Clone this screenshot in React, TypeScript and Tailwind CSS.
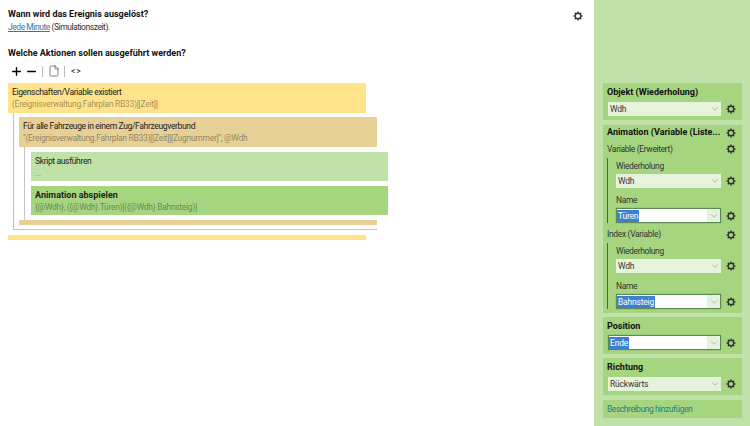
import React from 'react';
import { ChevronDown, Plus, Minus, File } from 'lucide-react';

// chunky little cog like the one in the reference, lucide's has too many curves
function Gear({ className = '' }: { className?: string }) {
  return (
    <svg viewBox="-1 -1 14 14" className={`w-3 h-3 shrink-0 ${className}`} fill="none" stroke="#333">
      <circle cx="6" cy="6" r="3.2" strokeWidth="1.5" />
      <path
        d="M6 .8V2.6M6 9.4V11.2M.8 6H2.6M9.4 6H11.2M2.3 2.3L3.6 3.6M8.4 8.4L9.7 9.7M9.7 2.3L8.4 3.6M3.6 8.4L2.3 9.7"
        strokeWidth="1.6"
      />
    </svg>
  );
}

function Select({ value, active = false }: { value: string; active?: boolean }) {
  return (
    <div
      className={`flex-1 flex items-center justify-between ${
        active ? 'h-[15px] bg-white border border-[#5f8a56] shadow-[0_0_1px_#5f8a56]' : 'h-[14px] pl-[1px] bg-[#e6f3dc]'
      }`}
    >
      <span className={`text-[8.5px] tracking-[-0.2px] leading-[12px] px-[1px] ${active ? 'bg-[#3a7fd0] text-white' : 'text-[#333]'}`}>
        {value}
      </span>
      <span className={`h-full w-[13px] flex items-center justify-center ${active ? 'bg-[#e6f3dc]' : ''}`}>
        <ChevronDown className="w-2.5 h-2.5 text-[#8a9a80]" strokeWidth={1.5} />
      </span>
    </div>
  );
}

function SelectRow({ value, active }: { value: string; active?: boolean }) {
  return (
    <div className="flex items-center gap-[4px]">
      <Select value={value} active={active} />
      <Gear />
    </div>
  );
}

function Panel({ title, children }: { title: string; children: React.ReactNode }) {
  return (
    <div className="bg-[#a5d67f] h-[37px] px-[5px] pt-[2px]">
      <div className="text-[9px] leading-[14px] h-[14px] font-bold text-[#111] -ml-[1px] mb-[3px]">{title}</div>
      {children}
    </div>
  );
}

function NestedField({ label, value, active }: { label: string; value: string; active?: boolean }) {
  return (
    <div>
      <div className="text-[8.5px] tracking-[-0.35px] leading-[12px] text-[#333] h-[16px] flex items-center">{label}</div>
      <SelectRow value={value} active={active} />
    </div>
  );
}

function ActionBlock({
  title,
  sub,
  className,
  bold,
}: {
  title: string;
  sub: string;
  className: string;
  bold?: boolean;
}) {
  return (
    <div className={`px-[4px] pt-[3px] ${className}`}>
      <div className={`leading-[12px] text-[#222] ${bold ? 'font-bold text-[9px]' : 'text-[8.5px] tracking-[-0.35px]'}`}>{title}</div>
      <div className="text-[8.5px] tracking-[-0.3px] leading-[12px] text-black/40">{sub}</div>
    </div>
  );
}

export default function App() {
  return (
    <div className="w-[750px] h-[426px] flex bg-white overflow-hidden font-['Roboto',sans-serif]">
      <div className="flex-1 pl-[8px] pr-[10px] pt-[8px]">
        <div className="flex justify-between">
          <div>
            <div className="text-[9px] leading-[13px] font-bold text-[#111]">Wann wird das Ereignis ausgelöst?</div>
            <div className="text-[8.5px] tracking-[-0.45px] leading-[13px] text-[#333]">
              <span className="text-[#2a7aa8] underline">Jede Minute</span> (Simulationszeit).
            </div>
          </div>
          <Gear className="mt-[2px]" />
        </div>

        <div className="text-[9px] leading-[13px] font-bold text-[#111] mt-[13px]">Welche Aktionen sollen ausgeführt werden?</div>
        <div className="flex items-center h-[14px] mt-[4px] pl-[2px] mb-[5px]">
          <Plus className="w-[13px] h-[13px] text-black" strokeWidth={2.5} />
          <Minus className="w-[13px] h-[13px] text-black ml-[2px]" strokeWidth={2.5} />
          <span className="w-px h-[11px] bg-[#bbb] ml-[4px]" />
          <File className="w-3 h-3 text-[#555] ml-[5px]" strokeWidth={1.5} />
          <span className="w-px h-[11px] bg-[#bbb] ml-[4px]" />
          <span className="text-[8.5px] leading-[14px] text-[#222] ml-[6px] tracking-[1px]">&lt;&gt;</span>
        </div>

        <div className="w-[358px]">
          <ActionBlock className="h-[30px] bg-[#ffe38a]" title="Eigenschaften/Variable existiert" sub="(Ereignisverwaltung.Fahrplan RB33)[[Zeit]]" />
          <div className="ml-[5px] w-[364px] border-l border-b border-[#c4c4c4] pl-[5px] pt-[4px] pb-[4px]">
            <div className="w-[358px]">
              <ActionBlock className="h-[30px] bg-[#e6d096]" title="Für alle Fahrzeuge in einem Zug/Fahrzeugverbund" sub={'"(Ereignisverwaltung.Fahrplan RB33)[[Zeit]][Zugnummer]", @Wdh'} />
              <div className="ml-[5px] w-[364px] border-l border-[#c4c4c4] pl-[6px] pt-[5px] pb-[5px] flex flex-col gap-[5px]">
                <ActionBlock className="h-[29px] bg-[#c0e2a8]" title="Skript ausführen" sub="..." />
                <ActionBlock className="h-[29px] bg-[#a5d67f]" bold title="Animation abspielen" sub="{@Wdh}, ({@Wdh}.Türen)[({@Wdh}.Bahnsteig)]" />
              </div>
              <div className="h-[5px] bg-[#e6d096]" />
            </div>
          </div>
          <div className="h-[5px] bg-[#ffe38a] mt-[5px]" />
        </div>
      </div>

      <div className="w-[156px] bg-[#c0e2a8] pl-[9px] pr-[8px] pt-[83px] flex flex-col gap-[4px]">
        <Panel title="Objekt (Wiederholung)">
          <SelectRow value="Wdh" />
        </Panel>

        <div className="bg-[#a5d67f] mt-[1px] pl-[4px] pr-[5px] pt-[1px] h-[188px]">
          <div className="flex items-center justify-between h-[14px]">
            <span className="text-[9px] font-bold text-[#111] whitespace-nowrap">Animation (Variable (Liste...</span>
            <Gear />
          </div>
          <div className="flex items-center justify-between h-[18px]">
            <span className="text-[8.5px] tracking-[-0.35px] text-[#333]">Variable (Erweitert)</span>
            <Gear />
          </div>
          <div className="border-l border-[#4a6a3a] pl-[8px]">
            <NestedField label="Wiederholung" value="Wdh" />
            <div className="h-[4px]" />
            <NestedField label="Name" value="Türen" active />
          </div>
          <div className="flex items-center justify-between h-[17px] mt-[3px]">
            <span className="text-[8.5px] tracking-[-0.35px] text-[#333]">Index (Variable)</span>
            <Gear />
          </div>
          <div className="border-l border-[#4a6a3a] pl-[8px]">
            <NestedField label="Wiederholung" value="Wdh" />
            <div className="h-[5px]" />
            <NestedField label="Name" value="Bahnsteig" active />
          </div>
        </div>

        <Panel title="Position">
          <div className="-mt-[1px]">
            <SelectRow value="Ende" active />
          </div>
        </Panel>
        <Panel title="Richtung">
          <SelectRow value="Rückwärts" />
        </Panel>
        <div className="bg-[#a5d67f] mt-[1px] h-[18px] px-[4px] flex items-center text-[8.5px] tracking-[-0.45px] text-[#1f7f8f]">Beschreibung hinzufügen</div>
      </div>
    </div>
  );
}
